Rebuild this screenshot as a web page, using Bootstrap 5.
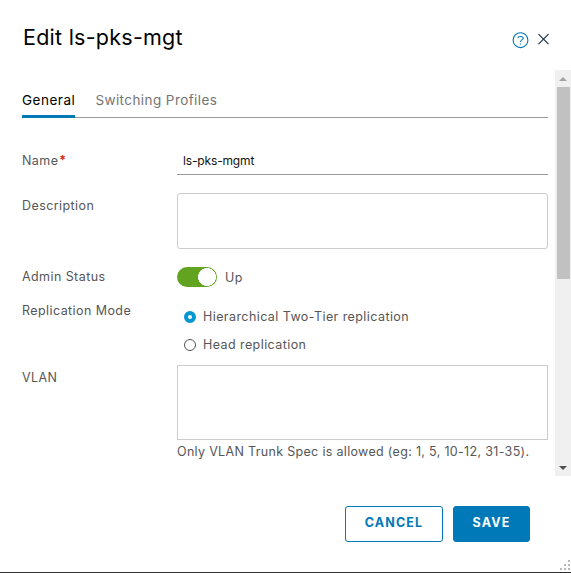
<!DOCTYPE html>
<html lang="en">
<head>
<meta charset="utf-8">
<meta name="viewport" content="width=device-width, initial-scale=1">
<title>Edit ls-pks-mgt</title>
<link rel="stylesheet" href="https://cdn.jsdelivr.net/npm/bootstrap@5.3.0/dist/css/bootstrap.min.css">
<style>
  body { font-family: Inter, "Open Sans", sans-serif; font-size: 12.5px; line-height: 20px; letter-spacing: .42px; color: #565656; }
  .dialog-frame { width: 571px; height: 573px; border-bottom: 1px solid #313131; }
  .dialog-head { height: 70px; padding: 22px 21px 0 23px; }
  .dialog-title { font-size: 21.5px; line-height: 30px; color: #000; letter-spacing: .25px; }
  .head-icons { padding-top: 10px; gap: 8px; }
  .dialog-main { height: 406px; }
  .form-area { padding: 0 7px 0 22px; }
  .tab-strip { height: 48px; margin-bottom: 30px; gap: 20px; box-shadow: inset 0 -1px #9a9a9a; }
  .tab-strip .nav-link { padding: 20px 0 0; font-size: 13.5px; line-height: 21px; color: #747474; border-radius: 0; }
  .tab-strip .nav-link.active { color: #000; letter-spacing: .52px; box-shadow: inset 0 -3px #0079b8; }
  .field-label { width: 155px; }
  .label-text { display: inline-block; padding-top: 3px; }
  .required { color: #c92100; font-weight: 600; margin-left: 1px; }
  .name-row { height: 45px; }
  .name-input { height: 27px; padding: 2px 6px 4px; border: 0; border-bottom: 1px solid #9a9a9a; border-radius: 0; font-size: 12px; line-height: 20px; letter-spacing: -.15px; color: #111; }
  .desc-row { height: 75px; }
  .desc-input { height: 56px; border-color: #ccc; border-radius: 3px; resize: none; }
  .status-row { height: 30px; margin-top: -2px; }
  .status-label { padding-top: 1px; }
  .status-text { padding-top: 2px; }
  .status-switch.form-check-input { width: 40px; height: 20px; margin: 1px 0 0; border: 0; border-radius: 10px; background-color: #62a420;
    background-image: radial-gradient(circle at 30px 10px, #fff 8.7px, transparent 9.2px); background-size: 40px 20px; background-position: 0 0; }
  .mode-row { height: 69px; }
  .mode-list { padding-top: 7px; }
  .mode-label { padding-top: 5px; }
  .mode-choice { height: 28px; padding-left: 7px; gap: 7px; }
  .mode-choice .form-check-input { width: 12px; height: 12px; margin: 0; border: 1px solid #565656; }
  .mode-choice .form-check-input:checked { border: 4px solid #0095d3; background: #fff; }
  .vlan-input { height: 75px; border-color: #ccc; border-radius: 0; resize: none; }
  .hint { line-height: 22px; margin-top: 1px; letter-spacing: .32px; white-space: nowrap; }
  .scroll-track { width: 16px; background: #f0f0f0; }
  .scroll-arrow { height: 17px; }
  .scroll-thumb { height: 192px; margin: 0 1px 0 2px; background: #c1c1c1; }
  .dialog-foot { height: 96px; padding: 30px 41px 0 0; gap: 10px; }
  .dialog-foot .btn { height: 36px; border-radius: 3px; border-color: #0079b8; padding: 0 0 2px; font-size: 12.5px; font-weight: 700; line-height: 30px; letter-spacing: 1.15px; }
  .cancel-btn { width: 98px; color: #0079b8; background: #fff; }
  .save-btn { width: 77px; color: #fff; background: #0079b8; }
  .grip { right: 0; bottom: 1px; }
</style>
</head>
<body class="bg-white overflow-hidden">
<div class="dialog-frame position-relative d-flex flex-column bg-white">
  <header class="dialog-head d-flex justify-content-between">
    <h1 class="dialog-title fw-normal m-0">Edit ls-pks-mgt</h1>
    <div class="head-icons d-flex">
      <svg width="17" height="17" viewBox="0 0 17 17" fill="none" stroke="#0079b8" stroke-width="1.1"><circle cx="8.5" cy="8.2" r="7.4"/><path d="M5.8 6.1C6.2 3.9 11.2 3.9 11.2 6.3C11.2 8 8.5 7.8 8.5 10M8.5 11.4V12.5"/></svg>
      <svg width="13" height="16" viewBox="0 0 13 16" fill="none" stroke="#1a3550" stroke-width="1.2"><path d="M1.5 2.2L11.5 12.2M11.5 2.2L1.5 12.2"/></svg>
    </div>
  </header>

  <main class="dialog-main d-flex">
    <form class="form-area flex-grow-1">
      <nav class="tab-strip nav">
        <a class="nav-link active" href="#">General</a>
        <a class="nav-link" href="#">Switching Profiles</a>
      </nav>

      <div class="name-row d-flex">
        <label class="field-label" for="name"><span class="label-text">Name<span class="required">*</span></span></label>
        <input id="name" class="name-input form-control flex-grow-1 w-auto" value="ls-pks-mgmt">
      </div>
      <div class="desc-row d-flex">
        <label class="field-label" for="description"><span class="label-text">Description</span></label>
        <textarea id="description" class="desc-input form-control flex-grow-1 w-auto"></textarea>
      </div>
      <div class="status-row d-flex">
        <label class="field-label status-label" for="status">Admin Status</label>
        <div class="d-flex gap-2">
          <input id="status" type="checkbox" role="switch" class="status-switch form-check-input" checked>
          <span class="status-text">Up</span>
        </div>
      </div>
      <div class="mode-row d-flex">
        <span class="field-label mode-label">Replication Mode</span>
        <div class="mode-list">
          <label class="mode-choice d-flex align-items-center"><input type="radio" name="mode" class="form-check-input" checked><span>Hierarchical Two-Tier replication</span></label>
          <label class="mode-choice d-flex align-items-center"><input type="radio" name="mode" class="form-check-input"><span>Head replication</span></label>
        </div>
      </div>
      <div class="d-flex">
        <label class="field-label" for="vlan"><span class="label-text">VLAN</span></label>
        <div class="flex-grow-1">
          <textarea id="vlan" class="vlan-input form-control d-block"></textarea>
          <div class="hint">Only VLAN Trunk Spec is allowed (eg: 1, 5, 10-12, 31-35).</div>
        </div>
      </div>
    </form>
    <div class="scroll-track d-flex flex-column">
      <div class="scroll-arrow d-flex align-items-center justify-content-center"><svg width="8" height="4" viewBox="0 0 8 4" fill="#a3a3a3"><path d="M0 4L4 0L8 4Z"/></svg></div>
      <div class="scroll-thumb"></div>
      <div class="scroll-arrow mt-auto d-flex align-items-center justify-content-center"><svg width="8" height="4" viewBox="0 0 8 4" fill="#505050"><path d="M0 0H8L4 4Z"/></svg></div>
    </div>
  </main>

  <footer class="dialog-foot d-flex justify-content-end">
    <button type="button" class="cancel-btn btn">CANCEL</button>
    <button type="button" class="save-btn btn">SAVE</button>
  </footer>
  <svg class="grip position-absolute" width="12" height="12" viewBox="0 0 12 12" fill="#b8b8b8"><path d="M9 1h2v2h-2zM5 5h2v2h-2zM9 5h2v2h-2zM1 9h2v2h-2zM5 9h2v2h-2zM9 9h2v2h-2z"/></svg>
</div>
<script src="https://cdn.jsdelivr.net/npm/bootstrap@5.3.0/dist/js/bootstrap.bundle.min.js"></script>
</body>
</html>
